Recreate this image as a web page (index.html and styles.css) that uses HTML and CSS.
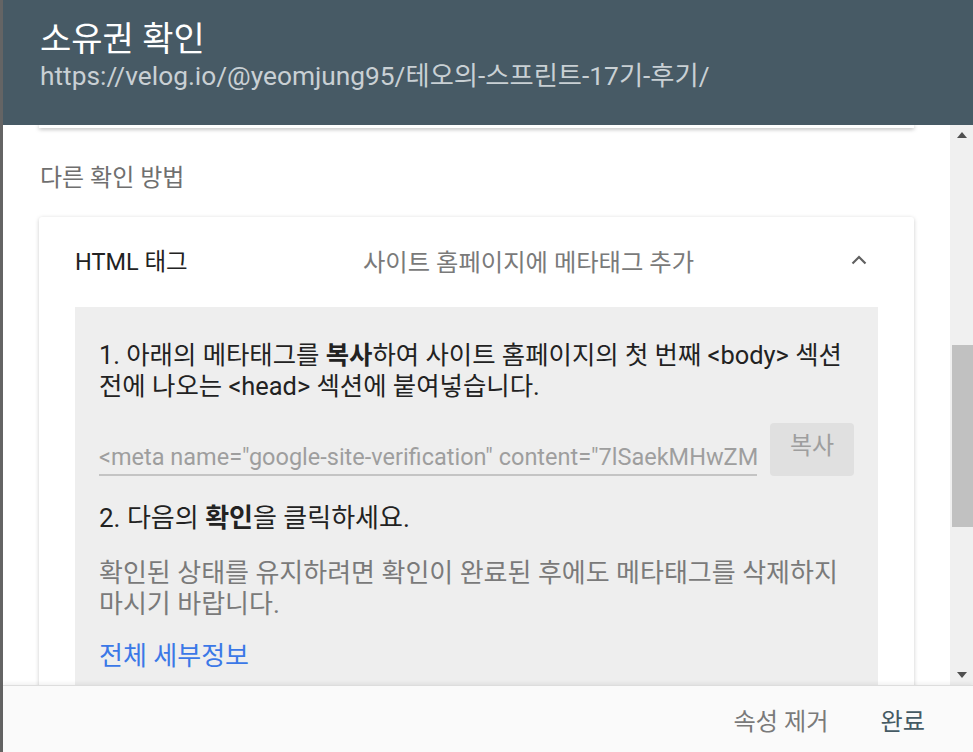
FILE: index.html
```html
<!DOCTYPE html>
<html lang="ko">
<head>
    <meta charset="UTF-8">
    <meta name="viewport" content="width=device-width, initial-scale=1.0">
    <title>소유권 확인</title>
    <link rel="stylesheet" href="styles.css">
</head>
<body>
    <div class="frame-edge"></div>
    <div class="dialog">
        <div class="dialog-header">
            <div class="dialog-title">소유권 확인</div>
            <div class="dialog-url">https://velog.io/@yeomjung95/테오의-스프린트-17기-후기/</div>
        </div>
        <div class="dialog-body">
            <div class="content">
                <div class="prev-card"></div>
                <div class="section-label">다른 확인 방법</div>
                <div class="method-card">
                    <div class="method-head">
                        <div class="method-name">HTML 태그</div>
                        <div class="method-desc">사이트 홈페이지에 메타태그 추가</div>
                        <svg class="chevron" width="24" height="24" viewBox="0 0 24 24">
                            <path d="M5.5 15.5 L12 9 L18.5 15.5" fill="none" stroke="#616161" stroke-width="2.2"/>
                        </svg>
                    </div>
                    <div class="method-box">
                        <p class="step">1. 아래의 메타태그를 <b>복사</b>하여 사이트 홈페이지의 첫 번째 &lt;body&gt; 섹션 전에 나오는 &lt;head&gt; 섹션에 붙여넣습니다.</p>
                        <div class="copy-row">
                            <div class="meta-input">&lt;meta name="google-site-verification" content="7lSaekMHwZMxq2" /&gt;</div>
                            <button class="copy-button">복사</button>
                        </div>
                        <p class="step step-two">2. 다음의 <b>확인</b>을 클릭하세요.</p>
                        <p class="note">확인된 상태를 유지하려면 확인이 완료된 후에도 메타태그를 삭제하지 마시기 바랍니다.</p>
                        <a class="details-link" href="#">전체 세부정보</a>
                    </div>
                </div>
            </div>
            <div class="scrollbar">
                <div class="arrow arrow-up"></div>
                <div class="track">
                    <div class="thumb"></div>
                </div>
                <div class="arrow arrow-down"></div>
            </div>
        </div>
        <div class="dialog-footer">
            <button class="footer-button remove">속성 제거</button>
            <button class="footer-button done">완료</button>
        </div>
    </div>
</body>
</html>
```

FILE: styles.css
```css
body {
    margin: 0;
    padding: 0;
    display: flex;
    height: 752px;
    overflow: hidden;
    font-family: Roboto, "Noto Sans CJK KR", sans-serif;
    background: #ffffff;
}
.frame-edge {
    width: 3px;
    background-color: #646464;
    flex-shrink: 0;
}
.dialog {
    flex: 1;
    min-width: 0;
    display: flex;
    flex-direction: column;
    height: 752px;
    background: white;
}
.dialog-header {
    height: 125px;
    box-sizing: border-box;
    background-color: #475a65;
    padding: 18px 37px 0;
    flex-shrink: 0;
}
.dialog-title {
    color: white;
    font-size: 34px;
    line-height: 42px;
}
.dialog-url {
    color: #c9d0d4;
    font-size: 26.3px;
    line-height: 32px;
    white-space: nowrap;
}
.dialog-body {
    flex: 1;
    display: flex;
    min-height: 0;
}
.content {
    flex: 1;
    min-width: 0;
    overflow: hidden;
    padding: 0 36px;
}
.prev-card {
    height: 3px;
    background: white;
    box-shadow: 0 1px 4px rgba(0, 0, 0, 0.35);
}
.section-label {
    color: #6f6f6f;
    font-size: 24px;
    line-height: 28px;
    margin: 36px 0 0 1px;
}
.method-card {
    margin-top: 25px;
    background: white;
    border-radius: 3px;
    box-shadow: 0 1px 4px rgba(0, 0, 0, 0.2);
    padding: 0 36px 40px;
}
.method-head {
    display: flex;
    align-items: center;
    height: 86px;
    padding-bottom: 4px;
}
.method-name {
    width: 288px;
    font-size: 23.5px;
    color: #222222;
}
.method-desc {
    flex: 1;
    font-size: 24.3px;
    color: #7a7a7a;
}
.chevron {
    margin-right: 7px;
}
.method-box {
    background-color: #eeeeee;
    padding: 33px 24px 20px;
}
.step {
    margin: 0;
    font-size: 25.4px;
    line-height: 31px;
    color: #222222;
}
.step b {
    font-weight: bold;
}
.copy-row {
    display: flex;
    align-items: flex-end;
    gap: 13px;
    margin-top: 21px;
}
.meta-input {
    flex: 1;
    min-width: 0;
    overflow: hidden;
    white-space: nowrap;
    font-size: 23.5px;
    color: #9e9e9e;
    line-height: 28px;
    padding-bottom: 3px;
    border-bottom: 2px solid #c4c4c4;
}
.copy-button {
    width: 84px;
    flex-shrink: 0;
    height: 53px;
    border: none;
    border-radius: 4px;
    background-color: #e0e0e0;
    color: #9e9e9e;
    font-family: inherit;
    font-size: 24px;
    padding: 0 0 12px;
}
.step-two {
    margin-top: 27px;
    font-size: 26px;
}
.note {
    margin: 24px 0 0;
    font-size: 26px;
    line-height: 31px;
    color: #7a7a7a;
}
.details-link {
    display: inline-block;
    margin-top: 20px;
    font-size: 26px;
    line-height: 32px;
    color: #3b78e7;
    text-decoration: none;
}
.scrollbar {
    width: 23px;
    flex-shrink: 0;
    background-color: #f0f0f0;
    display: flex;
    flex-direction: column;
    align-items: center;
}
.arrow {
    width: 0;
    height: 0;
    border-left: 5px solid transparent;
    border-right: 5px solid transparent;
    margin: 7px 0;
}
.arrow-up {
    border-bottom: 6px solid #505050;
}
.arrow-down {
    border-top: 6px solid #505050;
}
.track {
    flex: 1;
    width: 100%;
    padding-top: 200px;
    box-sizing: border-box;
}
.thumb {
    height: 182px;
    margin-left: 2px;
    background-color: #c1c1c1;
}
.dialog-footer {
    height: 67px;
    flex-shrink: 0;
    box-sizing: border-box;
    background-color: #fafafa;
    border-top: 1px solid #dddddd;
    box-shadow: 0 -2px 4px rgba(0, 0, 0, 0.06);
    display: flex;
    justify-content: flex-end;
    align-items: center;
    padding: 0 40px 0 0;
    gap: 36px;
    position: relative;
}
.footer-button {
    border: none;
    background: none;
    font-family: inherit;
    font-size: 24.2px;
    padding: 6px 8px;
    cursor: pointer;
}
.remove {
    color: #7a7a7a;
}
.done {
    color: #455a64;
}
```
